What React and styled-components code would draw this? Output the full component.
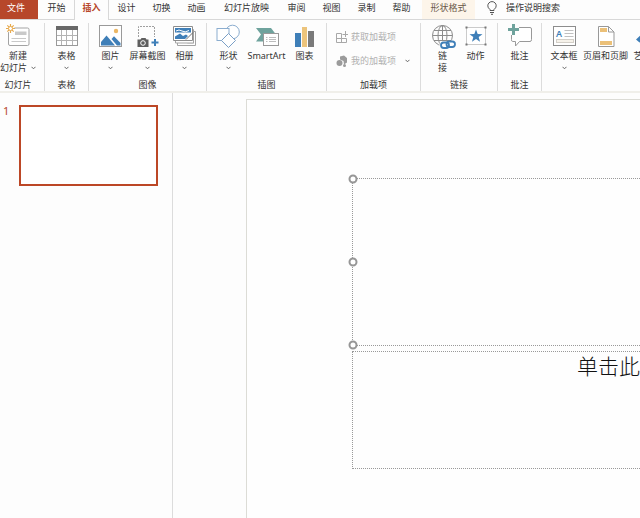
import React from "react";
import styled, { createGlobalStyle } from "styled-components";

const tabs = [
  { name: "开始" },
  { name: "插入", active: true },
  { name: "设计" },
  { name: "切换" },
  { name: "动画" },
  { name: "幻灯片放映", wide: true },
  { name: "审阅" },
  { name: "视图" },
  { name: "录制" },
  { name: "帮助" },
];

const Chevron = () => (
  <svg width="5" height="4" viewBox="0 0 5 4" fill="none" stroke="#666" aria-hidden="true">
    <path d="M0.5 0.8 L2.5 2.8 L4.5 0.8" />
  </svg>
);

const NewSlideIcon = () => (
  <Icon>
    <rect x="2.5" y="4" width="20.5" height="17.5" rx="1.5" fill="#fff" stroke="#a3a3a3" />
    <rect x="9" y="7.5" width="11.5" height="3.5" fill="#c9c9c9" />
    <path d="M5.5 14.5 H20 M5.5 17.5 H20" stroke="#c9c9c9" />
    <circle cx="4.5" cy="4.5" r="4" fill="#fff" />
    <path
      d="M4.5 0 V9 M0 4.5 H9 M1.3 1.3 L7.7 7.7 M7.7 1.3 L1.3 7.7"
      stroke="#e7a94c"
      strokeWidth="1.2"
    />
    <circle cx="4.5" cy="4.5" r="2" fill="#fff" stroke="#e7a94c" />
  </Icon>
);

const TableIcon = () => (
  <Icon>
    <rect x="1.5" y="3.5" width="21" height="18" fill="#fff" stroke="#999" />
    <rect x="1" y="2" width="22" height="4" fill="#686868" />
    <path d="M2 11.5 H22 M2 16.5 H22 M6.5 6 V21 M11.5 6 V21 M17.5 6 V21" stroke="#b3b3b3" />
  </Icon>
);

const PictureIcon = () => (
  <Icon>
    <rect x="1.5" y="1.5" width="22" height="21" fill="#fff" stroke="#9a9a9a" />
    <circle cx="18" cy="7" r="2.2" fill="#ebb765" />
    <path d="M3 21.5 V18 L8.500 11.500 L17 21.500 Z" fill="#3f7fb8" />
    <path d="M13.500 15 L16 12.300 L22.500 19 V21.500 H19 Z" fill="#3f7fb8" />
  </Icon>
);

const ScreenshotIcon = () => (
  <Icon>
    <path d="M3.5 13 V2.5 H19.5 V13" fill="none" stroke="#a0a0a0" strokeDasharray="2 1" />
    <path d="M2.500 15.500 H5.500 L6.500 14 H10.500 L11.500 15.500 H13.500 V23 H2.500 Z" fill="#5f5f5f" />
    <circle cx="8" cy="19" r="2.300" fill="#5f5f5f" stroke="#fff" />
    <path d="M20 15 V22 M16.500 18.500 H23.500" stroke="#3f7fb8" strokeWidth="2" />
  </Icon>
);

const AlbumIcon = () => (
  <Icon>
    <path d="M4.500 7.500 H22.500 V21.500 H4.500 Z" fill="#fff" stroke="#a3a3a3" />
    <path d="M6.500 19.500 L14 19.500 L21 12 V19.500 Z" fill="#c4c4c4" />
    <path d="M2.500 5.500 H20.500 V19 H2.500 Z" fill="#fff" stroke="#a3a3a3" />
    <path d="M0.500 2.500 H19.500 V16.500 H0.500 Z" fill="#fff" stroke="#8d8d8d" />
    <rect x="2" y="4" width="16" height="4.500" fill="#3f7fb8" />
    <path d="M2 15 V12.500 L7 9.500 L10 12 L13 10.500 L15 12 L12 15 Z" fill="#3f7fb8" />
    <path d="M3 7 Q6 5 9 7 T16 6.500" fill="none" stroke="#fff" />
    <path d="M13 15.500 L20 8.500" stroke="#6f6f6f" />
  </Icon>
);

const ShapesIcon = () => (
  <Icon>
    <circle cx="16.5" cy="8" r="6.8" fill="#fff" stroke="#8badcf" />
    <rect x="1" y="4.5" width="12" height="12" fill="#fff" stroke="#8badcf" />
    <path d="M12.5 9.5 L19.5 16.5 L12.5 23.5 L5.5 16.5 Z" fill="#fff" stroke="#7a9fc6" />
  </Icon>
);

const SmartArtIcon = () => (
  <Icon>
    <path d="M1 4 H16 L21 10.5 L16 17.5 H1 L6 10.5 Z" fill="#6fa39d" />
    <rect x="8.5" y="9.5" width="15" height="12" fill="#fff" stroke="#999" />
    <path
      d="M11 13.5 H12.5 M14 13.500 H21 M11 15.500 H12.500 M14 15.500 H21 M11 17.500 H12.500 M14 17.500 H21"
      stroke="#bdbdbd"
    />
  </Icon>
);

const ChartIcon = () => (
  <Icon>
    <rect x="2" y="9" width="6" height="14" fill="#3f7fb8" />
    <rect x="9" y="3" width="5" height="20" fill="#ecc47c" />
    <rect x="15" y="7" width="6" height="16" fill="#7a7a7a" />
  </Icon>
);

const LinkIcon = () => (
  <Icon>
    <g fill="none" stroke="#8b8b8b">
      <circle cx="11.5" cy="11.5" r="10" />
      <ellipse cx="11.5" cy="11.5" rx="4.5" ry="10" />
      <path d="M1.5 11.5 H21.5 M3 6.5 H20 M3 16.5 H20 M11.5 1.5 V21.5" />
    </g>
    <rect x="8.5" y="17" width="17" height="8" rx="3.5" fill="#fdfdfd" />
    <g fill="none" stroke="#3f7fb8" strokeWidth="1.8">
      <rect x="10" y="18.5" width="8" height="5.5" rx="2.7" />
      <rect x="15.5" y="17.5" width="8.5" height="5.5" rx="2.7" />
    </g>
  </Icon>
);

const ActionIcon = () => (
  <Icon>
    <rect x="2.5" y="3.5" width="19" height="17" fill="#fff" stroke="#999" strokeDasharray="1 1" />
    <path d="M1.5 2.5 h2 v2 h-2 z M20.5 2.5 h2 v2 h-2 z M1.5 19.5 h2 v2 h-2 z M20.5 19.5 h2 v2 h-2 z" fill="#777" />
    <path
      d="M12 5.5 L13.7 10 L18.5 10.2 L14.7 13.1 L16 17.7 L12 15 L8 17.7 L9.3 13.1 L5.5 10.2 L10.3 10 Z"
      fill="#3f7fb8"
    />
  </Icon>
);

const CommentIcon = () => (
  <Icon>
    <path
      d="M11 3.5 H22 Q23.5 3.5 23.5 5 V15.5 Q23.5 17.5 22 17.5 H11.5 L7.5 22 V17.5 H4.5 Q3.5 17.5 3.5 15.5 V11"
      fill="#fff"
      stroke="#999"
    />
    <path d="M5.5 0 V11 M0 5.5 H11" stroke="#6fa39d" strokeWidth="3" />
  </Icon>
);

const TextBoxIcon = () => (
  <Icon>
    <rect x="1.5" y="2.5" width="22" height="19" fill="#fff" stroke="#8d8d8d" />
    <path d="M12.5 6.5 H21.5 M12.5 9.5 H21.5 M12.5 12.5 H21.5" stroke="#c0c0c0" />
    <rect x="4.5" y="15.5" width="17" height="3" fill="#f6f2ea" stroke="#d3cfc8" />
    <text x="4" y="13" fontSize="9" fontWeight="600" fill="#3f7fb8">
      A
    </text>
  </Icon>
);

const HeaderFooterIcon = () => (
  <Icon>
    <path d="M4.5 2.5 H14.5 L20 8 V22.5 H4.5 Z" fill="#fff" stroke="#999" />
    <path d="M14.5 2.5 V8 H20" fill="none" stroke="#999" />
    <rect x="6" y="4" width="7" height="4" fill="#ebc078" />
    <rect x="6" y="17" width="12" height="4" fill="#ebc078" />
  </Icon>
);

const WordArtIcon = () => (
  <Icon>
    <path d="M1 15.5 L15 2 L20 20 L16 21 L14.5 16 L8 17 L4.5 18.5 Z" fill="#3f7fb8" />
  </Icon>
);

const GetAddinsIcon = () => (
  <SmallIcon>
    <path d="M0.5 2.5 H5.5 V7.5 H10.5 V11.5 H0.5 Z M0.5 7.5 H5.5 V11.5" />
    <path d="M9.5 0 V6 M6.5 3.5 H12" />
  </SmallIcon>
);

const MyAddinsIcon = () => (
  <SmallIcon>
    <path d="M4 1.5 L8 0.5 L11 3 V7.5 L8 9.5 L7.5 6 L4 4.5 Z" fill="#9b9b9b" stroke="none" />
    <circle cx="3.5" cy="8" r="3" fill="#9b9b9b" stroke="none" />
    <circle cx="8.5" cy="10.5" r="1.5" fill="#9b9b9b" stroke="none" />
  </SmallIcon>
);

const groups = [
  { name: "幻灯片", width: 45, tight: true, tools: [{ icon: NewSlideIcon, label: "新建", more: "幻灯片", drop: true }] },
  { name: "表格", width: 44, tools: [{ icon: TableIcon, label: "表格", drop: true }] },
  {
    name: "图像",
    width: 118,
    tools: [
      { icon: PictureIcon, label: "图片", drop: true },
      { icon: ScreenshotIcon, label: "屏幕截图", drop: true },
      { icon: AlbumIcon, label: "相册", drop: true },
    ],
  },
  {
    name: "插图",
    width: 120,
    tools: [
      { icon: ShapesIcon, label: "形状", drop: true },
      { icon: SmartArtIcon, label: "SmartArt" },
      { icon: ChartIcon, label: "图表" },
    ],
  },
  {
    name: "加载项",
    width: 94,
    addins: [
      { icon: GetAddinsIcon, label: "获取加载项" },
      { icon: MyAddinsIcon, label: "我的加载项", drop: true },
    ],
  },
  {
    name: "链接",
    width: 77,
    tools: [
      { icon: LinkIcon, label: "链", more: "接" },
      { icon: ActionIcon, label: "动作" },
    ],
  },
  { name: "批注", width: 44, tools: [{ icon: CommentIcon, label: "批注" }] },
];

const textTools = [
  { icon: TextBoxIcon, label: "文本框", drop: true },
  { icon: HeaderFooterIcon, label: "页眉和页脚" },
  { icon: WordArtIcon, label: "艺术字" },
];

const ToolButton = ({ tool }) => (
  <Tool type="button">
    <tool.icon />
    <Line>{tool.label}</Line>
    {(tool.more || tool.drop) && (
      <Line>
        {tool.more}
        {tool.drop && <Chevron />}
      </Line>
    )}
  </Tool>
);

const App = () => {
  return (
    <Page>
      <GlobalStyle />
      <TabBar>
        <FileTab type="button">文件</FileTab>
        {tabs.map((tab) => (
          <Tab key={tab.name} type="button" $active={tab.active} $wide={tab.wide}>
            {tab.name}
          </Tab>
        ))}
        <FormatTab type="button">形状格式</FormatTab>
        <Search>
          <svg width="10" height="14" viewBox="0 0 10 14" fill="none" stroke="#555" aria-hidden="true">
            <path d="M3 9.5 V8.5 Q0.8 7 0.8 4.8 A4.2 4.2 0 0 1 9.2 4.8 Q9.2 7 7 8.5 V9.5 Z" />
            <path d="M3 11.5 H7 M4 13.3 H6" />
          </svg>
          <input type="text" placeholder="操作说明搜索" aria-label="操作说明搜索" />
        </Search>
      </TabBar>

      <Ribbon>
        {groups.map((group) => (
          <Group key={group.name} $width={group.width} $tight={group.tight}>
            {group.tools && (
              <Tools>
                {group.tools.map((tool) => (
                  <ToolButton key={tool.label} tool={tool} />
                ))}
              </Tools>
            )}
            {group.addins && (
              <Addins>
                {group.addins.map((tool) => (
                  <Addin key={tool.label} type="button">
                    <tool.icon />
                    <span>{tool.label}</span>
                    {tool.drop && <Chevron />}
                  </Addin>
                ))}
              </Addins>
            )}
            <GroupName>{group.name}</GroupName>
          </Group>
        ))}
        <LastGroup>
          <Tools>
            {textTools.map((tool) => (
              <ToolButton key={tool.label} tool={tool} />
            ))}
          </Tools>
        </LastGroup>
      </Ribbon>

      <Workspace>
        <Slides>
          <span>1</span>
          <Thumb type="button" aria-label="1" />
        </Slides>
        <Canvas>
          <Slide>
            <TitleBox>
              <Handle $top="0%" />
              <Handle $top="50%" />
              <Handle $top="100%" />
            </TitleBox>
            <SubtitleBox>单击此</SubtitleBox>
          </Slide>
        </Canvas>
      </Workspace>
    </Page>
  );
};
export default App;

const GlobalStyle = createGlobalStyle`
  * {
    box-sizing: border-box;
  }

  body {
    margin: 0;
    background-color: #fdfdfd;
    color: #333;
    font-family: "Noto Sans", "Noto Sans CJK SC", sans-serif;
    font-size: 9px;
    line-height: 12px;
  }

  button, input {
    margin: 0;
    padding: 0;
    border: none;
    background: none;
    color: inherit;
    font: inherit;
  }
`;

const Page = styled.div`
  display: flex;
  flex-direction: column;
  min-height: 100vh;
  overflow: hidden;
`;

const TabBar = styled.div`
  display: flex;
  height: 20px;
  border-bottom: 1px solid #d8d8d8;
`;

const Tab = styled.button`
  flex: none;
  width: ${(props) => (props.$wide ? "65px" : "35px")};
  height: ${(props) => (props.$active ? "20px" : "19px")};
  padding-bottom: 4px;
  white-space: nowrap;
  font-weight: ${(props) => (props.$active ? 700 : 400)};
  color: ${(props) => (props.$active ? "#b7472a" : "#333")};
  background-color: #fdfdfd;
  border: ${(props) => (props.$active ? "solid #d8d8d8" : "none")};
  border-width: 0 1px;
`;

const FileTab = styled(Tab)`
  width: 38px;
  margin-right: 1px;
  padding-right: 6px;
  color: #fff;
  background-color: #b7472a;
`;

const FormatTab = styled(Tab)`
  width: 53px;
  margin-left: 3px;
  color: #6b5848;
  background-color: #fdf5ea;
`;

const Search = styled.label`
  display: flex;
  align-items: center;
  flex: 1;
  gap: 9px;
  height: 16px;
  min-width: 0;
  padding-left: 12px;

  input {
    flex: 1;
    min-width: 0;
    outline: none;
  }

  input::placeholder {
    color: #333;
    opacity: 1;
  }
`;

const Ribbon = styled.div`
  display: flex;
  padding-top: 3px;
  border-bottom: 2px solid #f0efea;
  overflow: hidden;
`;

const Group = styled.div`
  flex: none;
  display: flex;
  flex-direction: column;
  width: ${(props) => props.$width}px;
  height: 68px;
  padding-right: ${(props) => (props.$tight ? "8px" : "0")};
  border-right: 1px solid #dcdcdc;
`;

const LastGroup = styled.div`
  flex: 1;
  min-width: 0;
  padding-left: 6px;
  display: flex;
`;

const Tools = styled.div`
  display: flex;
  flex: 1;
  justify-content: center;
  align-items: flex-start;
  gap: 1px;

  ${LastGroup} & {
    justify-content: flex-start;
  }
`;

const Tool = styled.button`
  flex: none;
  display: flex;
  flex-direction: column;
  align-items: center;
  min-width: 32px;
  padding: 1px 2px 0;
  white-space: nowrap;
`;

const Line = styled.span`
  display: flex;
  align-items: center;
  justify-content: center;
  gap: 4px;
  height: 12px;
`;

const Icon = styled.svg.attrs({ viewBox: "0 0 24 24", "aria-hidden": true })`
  width: 24px;
  height: 24px;
  margin-bottom: 2px;
  overflow: visible;
`;

const SmallIcon = styled.svg.attrs({ viewBox: "0 0 12 12", "aria-hidden": true })`
  width: 12px;
  height: 12px;
  fill: none;
  stroke: #a8a8a8;
`;

const GroupName = styled.div`
  text-align: center;
`;

const Addins = styled.div`
  flex: 1;
  display: flex;
  flex-direction: column;
  gap: 12px;
  padding: 8px 0 0 9px;
`;

const Addin = styled.button`
  display: flex;
  align-items: center;
  gap: 3px;
  height: 12px;
  white-space: nowrap;
  color: #b0b0b0;

  span {
    margin-right: 6px;
  }
`;

const Workspace = styled.div`
  flex: 1;
  display: flex;
`;

const Slides = styled.div`
  flex: none;
  display: flex;
  align-items: flex-start;
  width: 173px;
  padding: 12px 14px 0 3px;
  border-right: 1px solid #dcdcdc;

  span {
    width: 16px;
    font-size: 11px;
    color: #b7472a;
  }
`;

const Thumb = styled.button`
  flex: 1;
  height: 81px;
  border: 2px solid #bc4726;
  background-color: #fff;
`;

const Canvas = styled.div`
  flex: 1;
  display: flex;
  min-width: 0;
  padding: 6px 0 0 73px;
`;

const Slide = styled.div`
  flex: 1;
  display: flex;
  flex-direction: column;
  gap: 5px;
  padding: 78px 0 49px 105px;
  border: solid #dcdcd6;
  border-width: 1px 0 0 1px;
  background-color: #fefefe;
`;

const TitleBox = styled.div`
  position: relative;
  height: 168px;
  border: 1px dotted #999;
  border-right: none;
`;

const Handle = styled.span`
  position: absolute;
  left: 0;
  top: ${(props) => props.$top};
  width: 9px;
  height: 9px;
  border: 2px solid #969696;
  border-radius: 50%;
  background-color: #fff;
  transform: translate(-50%, -50%);
`;

const SubtitleBox = styled.div`
  height: 118px;
  border: 1px dotted #999;
  border-right: none;
  text-align: right;
  font-size: 21px;
  font-weight: 300;
  line-height: 28px;
  color: #111;
`;
